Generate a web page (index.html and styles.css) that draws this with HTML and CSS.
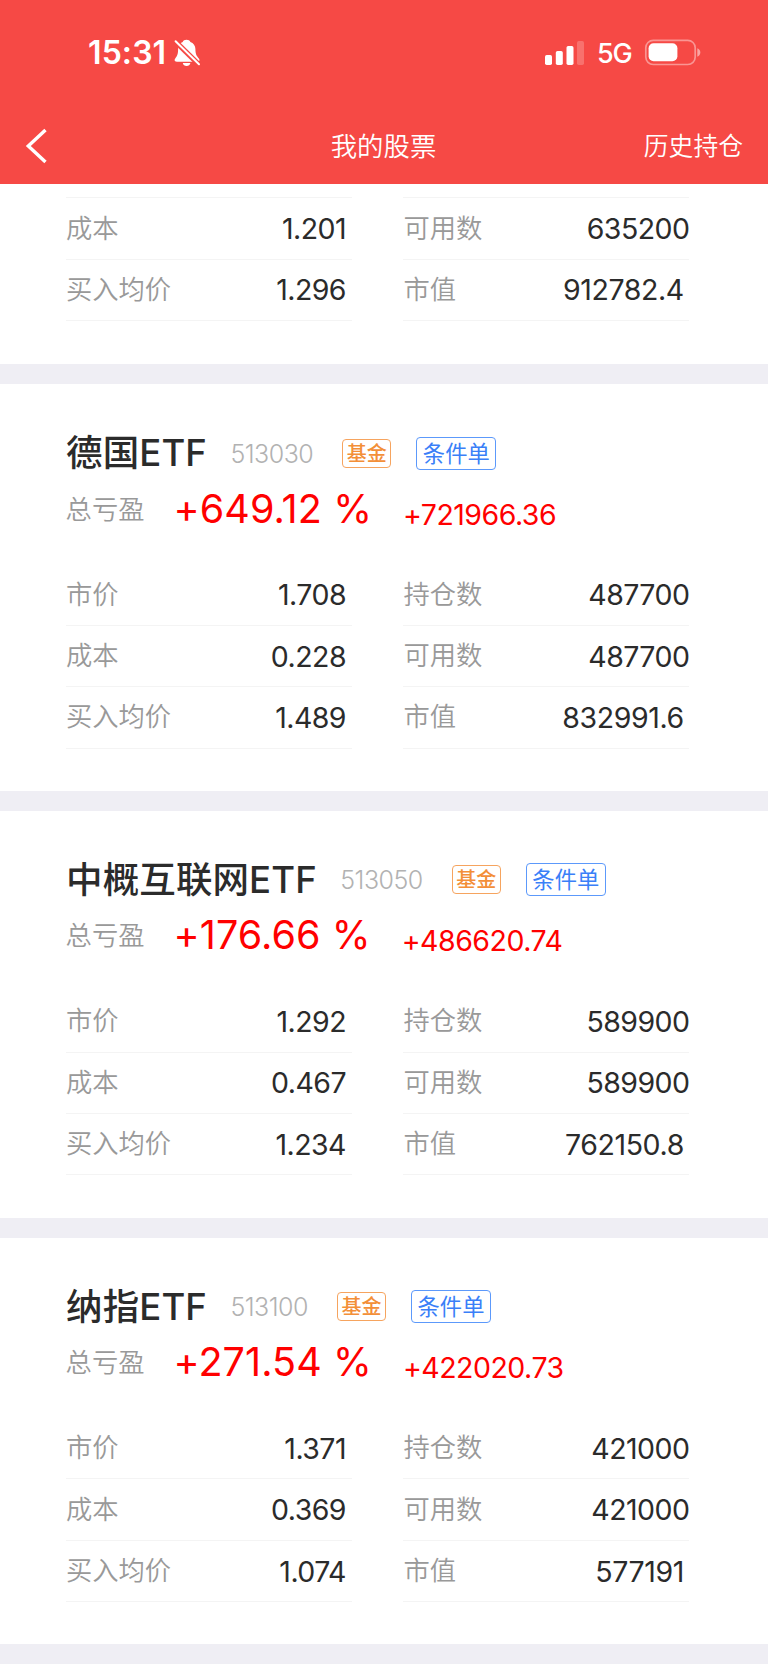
FILE: index.html
```html
<!DOCTYPE html>
<html lang="zh-CN">
<head>
<meta charset="utf-8">
<title>我的股票</title>
<link rel="stylesheet" href="styles.css">
</head>
<body>
<header class="header">
  <div class="status">
    <span class="time">15:31</span>
    <svg class="bell" viewBox="0 0 27 28" width="27" height="28"><path d="M12.5.8c1.900 0 3.400.9 3.900 2.100 3 1 5 3.700 5 7.200 0 5 1.200 7 3.400 9.300 1.300 1.600.6 3.300-1.400 3.300H2.900c-2.300 0-3-1.800-1.500-3.500C3.300 17 4.100 15 4.100 10.100c0-3.500 1.700-6.200 4.600-7.200C9.200 1.700 10.600.8 12.500.8zM8.800 24h7.600c-.3 1.800-1.900 3-3.800 3s-3.600-1.200-3.800-3z" fill="#fff"/><path d="M1.300 2.400l23.900 23.400" stroke="#f64945" stroke-width="5.200"/><path d="M1.600 2.300l23.400 23" stroke="#fff" stroke-width="2" stroke-linecap="round"/></svg>
    <svg class="signal" viewBox="0 0 40 26" width="40" height="26" fill="#fff"><rect x="1" y="15" width="7" height="10" rx="1.700"/><rect x="11.800" y="11" width="7" height="14" rx="1.700"/><rect x="22.500" y="6" width="7" height="19" rx="1.700"/><rect x="33" y="1" width="7" height="24" rx="1.700" opacity=".22"/></svg>
    <span class="net">5G</span>
    <svg class="battery" viewBox="0 0 57 27" width="57" height="27"><rect x="1.800" y="1.300" width="49.400" height="24.200" rx="7.500" fill="none" stroke="#fff" stroke-opacity=".42" stroke-width="1.700"/><rect x="4.600" y="4.300" width="28.800" height="18" rx="5" fill="#fff"/><path d="M53.300 9.300c2 .7 3 2.300 3 4.200s-1 3.500-3 4.200z" fill="#fff" opacity=".5"/></svg>
  </div>
  <nav class="nav">
    <svg class="back" viewBox="0 0 24 38" width="24" height="38"><path d="M21.500 3L4.300 19l17.200 16" fill="none" stroke="#fff" stroke-width="3.400"/></svg>
    <h1 class="title">我的股票</h1>
    <a class="history">历史持仓</a>
  </nav>
</header>
<main class="list">
  <section class="card card-clipped">
    <div class="grid">
      <div class="row"><span class="label">成本</span><span class="value">1.201</span></div>
      <div class="row"><span class="label">可用数</span><span class="value">635200</span></div>
      <div class="row"><span class="label">买入均价</span><span class="value">1.296</span></div>
      <div class="row worth"><span class="label">市值</span><span class="value">912782.4</span></div>
    </div>
  </section>
  <section class="card">
    <div class="head"><h2 class="name">德国ETF</h2><span class="code">513030</span><span class="tag">基金</span><span class="order">条件单</span></div>
    <div class="profit"><span class="label">总亏盈</span><span class="percent">+649.12 %</span><span class="amount">+721966.36</span></div>
    <div class="grid">
      <div class="row"><span class="label">市价</span><span class="value">1.708</span></div>
      <div class="row"><span class="label">持仓数</span><span class="value">487700</span></div>
      <div class="row"><span class="label">成本</span><span class="value">0.228</span></div>
      <div class="row"><span class="label">可用数</span><span class="value">487700</span></div>
      <div class="row"><span class="label">买入均价</span><span class="value">1.489</span></div>
      <div class="row worth"><span class="label">市值</span><span class="value">832991.6</span></div>
    </div>
  </section>
  <section class="card">
    <div class="head"><h2 class="name">中概互联网ETF</h2><span class="code">513050</span><span class="tag">基金</span><span class="order">条件单</span></div>
    <div class="profit"><span class="label">总亏盈</span><span class="percent">+176.66 %</span><span class="amount">+486620.74</span></div>
    <div class="grid">
      <div class="row"><span class="label">市价</span><span class="value">1.292</span></div>
      <div class="row"><span class="label">持仓数</span><span class="value">589900</span></div>
      <div class="row"><span class="label">成本</span><span class="value">0.467</span></div>
      <div class="row"><span class="label">可用数</span><span class="value">589900</span></div>
      <div class="row"><span class="label">买入均价</span><span class="value">1.234</span></div>
      <div class="row worth"><span class="label">市值</span><span class="value">762150.8</span></div>
    </div>
  </section>
  <section class="card">
    <div class="head"><h2 class="name">纳指ETF</h2><span class="code">513100</span><span class="tag">基金</span><span class="order">条件单</span></div>
    <div class="profit"><span class="label">总亏盈</span><span class="percent">+271.54 %</span><span class="amount">+422020.73</span></div>
    <div class="grid">
      <div class="row"><span class="label">市价</span><span class="value">1.371</span></div>
      <div class="row"><span class="label">持仓数</span><span class="value">421000</span></div>
      <div class="row"><span class="label">成本</span><span class="value">0.369</span></div>
      <div class="row"><span class="label">可用数</span><span class="value">421000</span></div>
      <div class="row"><span class="label">买入均价</span><span class="value">1.074</span></div>
      <div class="row worth"><span class="label">市值</span><span class="value">577191</span></div>
    </div>
  </section>
</main>
</body>
</html>
```
FILE: styles.css
```css
* { box-sizing: border-box; }
body {
  margin: 0;
  width: 768px;
  height: 1665px;
  overflow: hidden;
  background: #fff;
  font-family: Inter, "Noto Sans CJK SC", sans-serif;
  color: #2b2b2b;
  white-space: nowrap;
}
h1, h2 { margin: 0; font-weight: 400; }
svg { display: block; flex: none; }

.header { height: 184px; background: #f64945; color: #fff; }
.status { height: 106px; padding: 0 67px 0 88px; display: flex; align-items: center; }
.time { font-size: 32px; line-height: 38px; font-weight: 600; width: 86px; letter-spacing: 0.1px; margin-top: -1px; }
.bell { margin-top: -1px; }
.signal { margin-left: auto; margin-right: 13px; margin-top: -1px; }
.net { font-size: 27px; font-weight: 500; width: 47px; letter-spacing: -1.2px; }
.battery { margin-top: -2px; }
.nav { height: 78px; padding: 1px 25px 0 24px; display: grid; grid-template-columns: 1fr auto 1fr; align-items: center; }
.title { font-size: 26.400px; line-height: 36px; font-weight: 350; }
.history { font-size: 24.800px; line-height: 36px; font-weight: 350; justify-self: end; }

.card { height: 426.800px; padding: 38.500px 78.700px 0 65.600px; border-bottom: 20.800px solid #efeef4; }
.card-clipped { height: 200px; padding-top: 14px; }
.card-clipped .grid { margin-top: 0; }
.card-clipped .row:nth-child(-n+2) { border-top: 1.500px solid #f4f4f4; height: 62.400px; margin-top: -0.6px; }

.head { height: 60px; display: flex; align-items: center; }
.name { font-size: 36.500px; line-height: 60px; font-weight: 500; padding: 1px 0 0 0.5px; letter-spacing: 0.1px; }
.code { margin: 2px 0 0 23.500px; font-size: 25px; font-weight: 300; color: #b2b2b2; letter-spacing: -0.5px; }
.tag {
  margin: 1px 0 0 29px; width: 49px; height: 29px; border: 1.400px solid #f6a45f; border-radius: 4px;
  font-size: 20px; line-height: 29px; font-weight: 500; color: #f38f38; text-align: center;
}
.order {
  margin: 1px 0 0 25px; width: 80px; height: 33px; border: 1.400px solid #5c99fb; border-radius: 4px;
  font-size: 22.300px; line-height: 32px; color: #3a7ff8; text-align: center;
}
.profit { height: 52px; display: flex; align-items: center; color: #f00; }
.label { font-size: 26.300px; line-height: 38px; font-weight: 350; color: #999; }
.profit .label { margin-top: 2px; }
.percent { margin-left: 29px; font-size: 39.500px; font-weight: 380; letter-spacing: 0.1px; }
.amount { margin-left: 31px; margin-top: 11px; font-size: 28.500px; font-weight: 380; letter-spacing: -0.5px; }

.grid { margin-top: 30px; display: grid; grid-template-columns: 286.400px 286.400px; column-gap: 51px; }
.row { height: 61.400px; padding-left: 0.4px; padding-right: 6px; display: flex; justify-content: space-between; align-items: center; border-bottom: 1.500px solid #f4f4f4; }
.row:nth-child(even) { padding-right: 0; }
.row.row.worth { padding-right: 5.500px; }
.value { font-size: 28.500px; font-weight: 380; letter-spacing: -0.55px; }
.worth .value { letter-spacing: -0.4px; }
```
